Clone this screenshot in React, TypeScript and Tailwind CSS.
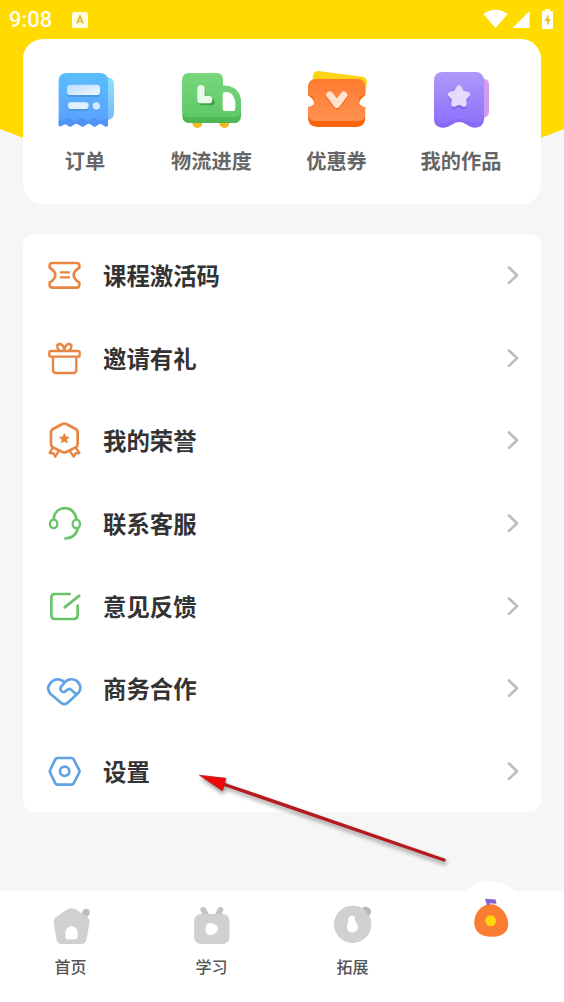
import type { ReactNode } from "react";

const ORANGE = "#e98540";
const GREEN = "#68c468";
const BLUE = "#5fa3e2";

function StatusBar() {
    return (
        <div className="flex h-[39px] items-center pl-[9px] pr-[11px] text-[#fffdee]">
            <span className="font-['Roboto',sans-serif] text-[22px] font-medium leading-[39px]">9:08</span>
            <svg className="ml-[20px]" width="16" height="16" viewBox="0 0 16 16">
                <rect width="16" height="16" rx="1.5" fill="#fffbe0" />
                <path d="M5 11.5L8 4l3 7.5M6 9.3h4" fill="none" stroke="#dfc024" strokeWidth="1.6" />
            </svg>
            <div className="ml-auto flex items-center pb-0.5">
                <svg width="25" height="20" viewBox="0 0 25 20" fill="#fff">
                    <path d="M0.3 5Q12.5 -3.500 24.700 5L12.500 19z" />
                </svg>
                <svg className="ml-1" width="18" height="20" viewBox="0 0 18 20" fill="#fff">
                    <path d="M17.500 2v17H0.500z" />
                </svg>
                <svg className="ml-3" width="11" height="20" viewBox="0 0 11 20">
                    <path d="M3 0h5v2h2q1 0 1 1v16q0 1-1 1H1q-1 0-1-1V3q0-1 1-1h2z" fill="#fff" />
                    <path d="M6.500 5L2.500 12H5v5l4-7H6.500z" fill="#e3c326" />
                </svg>
            </div>
        </div>
    );
}

function OrderIcon() {
    return (
        <svg width="60" height="60" viewBox="45 30 180 180">
            <defs>
                <linearGradient id="order-body" x1="0" y1="0" x2="0" y2="1">
                    <stop offset="0" stopColor="#59bffb" />
                    <stop offset="1" stopColor="#5c9dff" />
                </linearGradient>
                <linearGradient id="order-back" x1="0" y1="0" x2="0" y2="1">
                    <stop offset="0" stopColor="#8fe0fc" />
                    <stop offset="1" stopColor="#76b9fb" />
                </linearGradient>
                <linearGradient id="order-line" x1="0" y1="0" x2="1" y2="1">
                    <stop offset="0" stopColor="#b9dcff" />
                    <stop offset="1" stopColor="#f0f7ff" />
                </linearGradient>
            </defs>
            <path d="M190 52h14q18 2 18 20v88q0 16-18 20h-14z" fill="url(#order-back)" />
            <path d="M80 39h100q24 0 24 24v134q-7 6-14-1-9-10-18 0-8 8-16 0-10-10-20 0-8 8-17 0-10-10-20 0-8 8-17 0-7-6-14 0-6 5-12 1V63q0-24 24-24z" fill="url(#order-body)" />
            <path d="M56 172c4 12 12 13 19 6 7-6 13-6 20 0 7 6 12 6 19 0 7-6 13-6 20 0 7 6 12 6 19 0 7-6 13-6 20 0 7 6 12 6 19 0 4-3 8-4 12-3v22q-7 6-14-1-9-10-18 0-8 8-16 0-10-10-20 0-8 8-17 0-10-10-20 0-8 8-17 0-7-6-14 0-6 5-12 1z" fill="#4b8df0" opacity=".65" />
            <rect x="81" y="79" width="99" height="32" rx="10" fill="#448fd8" opacity=".7" />
            <rect x="84" y="132" width="62" height="21" rx="10" fill="#448fd8" opacity=".7" />
            <circle cx="169" cy="142" r="11" fill="#448fd8" opacity=".7" />
            <rect x="81" y="74" width="99" height="31" rx="10" fill="url(#order-line)" />
            <rect x="84" y="127" width="62" height="20" rx="10" fill="#e0f1ff" />
            <circle cx="169" cy="138" r="11" fill="#d2ebff" />
        </svg>
    );
}

function TruckIcon() {
    return (
        <svg width="60" height="60" viewBox="36 30 180 180">
            <defs>
                <linearGradient id="truck-body" x1="0" y1="0" x2="0" y2="1">
                    <stop offset="0" stopColor="#79d77c" />
                    <stop offset="1" stopColor="#5fc967" />
                </linearGradient>
            </defs>
            <circle cx="82" cy="189" r="15" fill="#f5b91d" />
            <circle cx="163" cy="189" r="15" fill="#f5b91d" />
            <path d="M60 39h77q22 0 22 22v16h8c28 2 45 20 46 49v41q0 22-22 22H60q-23 0-23-22V61q0-22 23-22z" fill="#4fb654" />
            <path d="M60 39h77q22 0 22 22v16h8c28 2 45 20 46 49v26q0 20-22 20H60q-23 0-23-20V61q0-22 23-22z" fill="url(#truck-body)" />
            <path d="M159 99q3-4 12-3 22 3 25 31v19q0 7-7 7h-24q-7 0-7-7v-40q0-5 1-7z" fill="#fff" />
            <path d="M96 93v33h28" fill="none" stroke="#429f49" strokeWidth="20" strokeLinecap="round" strokeLinejoin="round" />
            <path d="M93 86v33h23" fill="none" stroke="#e9fae8" strokeWidth="22" strokeLinecap="round" strokeLinejoin="round" />
        </svg>
    );
}

function CouponIcon() {
    return (
        <svg width="60" height="60" viewBox="34.5 30 180 180">
            <defs>
                <linearGradient id="coupon-body" x1="0" y1="0" x2="0" y2="1">
                    <stop offset="0" stopColor="#ff7b2f" />
                    <stop offset="1" stopColor="#ff9150" />
                </linearGradient>
            </defs>
            <path d="M52 47q3-15 17-14l132 17q14 3 13 17l-4 35H50z" fill="#fdd313" />
            <path d="M62 59h122q25 0 25 23v24c-8 7-17 14-18 22 4 9 10 11 18 11v38q-2 24-28 24H66q-27-1-28-24v-38c9 0 16-4 18-11-1-8-9-15-18-22V82q0-23 24-23z" fill="#fa650c" />
            <path d="M62 57h122q25 0 25 23v24c-11 2-18 7-18 17 1 10 8 13 18 14v26q0 22-24 22H62q-24 0-24-22v-26c10-1 17-4 18-14 0-10-7-15-18-17V80q0-23 24-23z" fill="url(#coupon-body)" />
            <path d="M38 122q14 1 18 7-4 9-18 12zM209 122q-14 1-18 7 4 9 18 12z" fill="#fff" />
            <path d="M102 111l22 28 22-28" fill="none" stroke="#dd5c17" strokeWidth="19" strokeLinecap="round" strokeLinejoin="round" opacity=".6" />
            <path d="M103 105l21 28 21-28" fill="none" stroke="#ffe3cd" strokeWidth="21" strokeLinecap="round" strokeLinejoin="round" />
        </svg>
    );
}

function WorksIcon() {
    return (
        <svg width="60" height="60" viewBox="33 30 180 180">
            <defs>
                <linearGradient id="works-body" x1="0" y1="0" x2="0" y2="1">
                    <stop offset="0" stopColor="#ae9af9" />
                    <stop offset="1" stopColor="#8b6dfc" />
                </linearGradient>
                <linearGradient id="works-star" x1="0" y1="0" x2="0" y2="1">
                    <stop offset="0" stopColor="#f4f0ff" />
                    <stop offset="1" stopColor="#d5c8fd" />
                </linearGradient>
            </defs>
            <path d="M180 56h12q15 3 15 18v80q0 16-15 20h-12z" fill="#cf9cf1" />
            <path d="M68 36h98q26 0 26 26v118q-3 22-28 23c-17-1-29-17-46-17-18 0-29 16-46 17-24 0-30-14-30-27V62q0-26 26-26z" fill="url(#works-body)" />
            <path d="M42 167q2 22 25 23 10 0 22-6 28-16 55 0 14 7 25 6 20-3 23-22v12q-3 22-28 23c-17-1-29-17-46-17-18 0-29 16-46 17-24 0-30-14-30-27z" fill="#7f62ee" opacity=".4" />
            <path d="M117 93l8 15 17 3-12 13 2 17-15-7-15 7 2-17-12-13 17-3z" fill="#7355d8" stroke="#7355d8" strokeWidth="15" strokeLinejoin="round" opacity=".45" />
            <path d="M117 84l8 16 17 3-12 12 2 17-15-7-15 7 2-17-12-12 17-3z" fill="url(#works-star)" stroke="#e5dcfd" strokeWidth="16" strokeLinejoin="round" />
        </svg>
    );
}

const shortcuts = [
    { label: "订单", icon: <OrderIcon /> },
    { label: "物流进度", icon: <TruckIcon /> },
    { label: "优惠券", icon: <CouponIcon /> },
    { label: "我的作品", icon: <WorksIcon /> },
];

function LineIcon({ viewBox, color, children }: { viewBox: string; color: string; children: ReactNode }) {
    return (
        <svg
            className="shrink-0"
            width="36"
            height="36"
            viewBox={viewBox}
            fill="none"
            stroke={color}
            strokeWidth="8"
            strokeLinecap="round"
            strokeLinejoin="round"
        >
            {children}
        </svg>
    );
}

const menuItems = [
    {
        label: "课程激活码",
        icon: (
            <LineIcon viewBox="78 82 108 108" color={ORANGE}>
                <path d="M97 100h73q8 0 8 8v6c-12 8-17 14-17 22s5 15 17 23v6q0 9-8 9H97q-8 0-8-9v-6c12-8 17-15 17-23s-5-14-17-22v-6q0-8 8-8z" />
                <path d="M123 128h24M123 143h24" strokeWidth="7" />
            </LineIcon>
        ),
    },
    {
        label: "邀请有礼",
        icon: (
            <LineIcon viewBox="78 330 108 108" color={ORANGE}>
                <rect x="88" y="363" width="91" height="17" rx="4" strokeWidth="7" />
                <path d="M99 382v38q0 9 9 9h52q9 0 9-9v-38" strokeWidth="7" />
                <path d="M133 362c-1-12-7-20-15-20-9 2-8 12 0 19M133 362c1-12 7-20 15-20 9 2 8 12 0 19" strokeWidth="7" />
            </LineIcon>
        ),
    },
    {
        label: "我的荣誉",
        icon: (
            <LineIcon viewBox="78 578 108 108" color={ORANGE}>
                <path d="M127 584q6-3 12 0l28 15q6 3 6 10v35q0 7-6 10l-28 14q-6 3-12 0l-28-14q-6-3-6-10v-35q0-7 6-10z" />
                <path d="M133 613l4.500 9 10 1.500-7.500 7 2 10-9-5-9 5 2-10-7.500-7 10-1.500z" fill={ORANGE} strokeWidth="2" />
                <path d="M97 657l-8 14 12 1 5 10 9-15M169 657l9 14-12 1-5 10-10-15" strokeWidth="7" />
            </LineIcon>
        ),
    },
    {
        label: "联系客服",
        icon: (
            <LineIcon viewBox="78 75.500 108 108" color={GREEN}>
                <path d="M101 116c3-20 17-31 34-31s31 12 34 31" />
                <ellipse cx="101" cy="132" rx="11" ry="13" strokeWidth="7" />
                <ellipse cx="169" cy="132" rx="11" ry="13" strokeWidth="7" />
                <path d="M174 146c-5 17-19 29-38 30" />
            </LineIcon>
        ),
    },
    {
        label: "意见反馈",
        icon: (
            <LineIcon viewBox="78 323 108 108" color={GREEN}>
                <path d="M149 341h-44q-11 0-11 11v53q0 11 11 11h57q11 0 11-11v-29" />
                <path d="M134 381l44-35" />
            </LineIcon>
        ),
    },
    {
        label: "商务合作",
        icon: (
            <LineIcon viewBox="78 571 108 108" color={BLUE}>
                <path d="M133 608c-9-10-25-12-35-4-15 10-17 26-7 38l32 27q10 9 20 0l31-28c12-12 8-28-5-38-11-7-26-5-35 5l-10 12c-7 9 1 20 10 16 7-3 10-10 16-8 4 1 8 8 16 13" />
            </LineIcon>
        ),
    },
    {
        label: "设置",
        icon: (
            <LineIcon viewBox="78 819 108 108" color={BLUE}>
                <path d="M113 834h41q5 0 7 4l16 31q3 5 0 10l-16 31q-2 4-7 4h-41q-5 0-7-4l-15-31q-3-5 0-10l15-31q2-4 7-4z" />
                <circle cx="134" cy="874" r="14" />
            </LineIcon>
        ),
    },
];

const tabs = [
    {
        label: "首页",
        icon: (
            <svg width="40" height="40" viewBox="151.500 105 120 120">
                <path d="M242 135l5-13c5-8 19-8 21 4 0 10-9 16-17 19z" fill="#bcbcbc" />
                <path d="M201 118q12-7 24 0l34 22q10 7 8 18l-9 50q-2 14-15 14h-60q-13 0-15-14l-8-48q-2-12 7-19z" fill="#d0d0d0" />
                <path d="M195 188c1-25 35-26 36 0v15q0 5-6 5h-24q-6 0-6-5z" fill="#fff" />
            </svg>
        ),
    },
    {
        label: "学习",
        icon: (
            <svg width="40" height="40" viewBox="575.500 105 120 120">
                <path d="M609 119l8 14M661 119l-7 14" stroke="#c3c3c3" strokeWidth="17" strokeLinecap="round" />
                <rect x="582" y="132" width="106" height="90" rx="20" fill="#d0d0d0" />
                <path d="M617 169q4-14 20-9 23 9 14 24-12 14-26 11-12-5-8-26z" fill="#fff" />
            </svg>
        ),
    },
    {
        label: "拓展",
        icon: (
            <svg width="40" height="40" viewBox="153 105 120 120">
                <circle cx="212" cy="163" r="56" fill="#d0d0d0" />
                <path d="M240 113c11-7 29 1 27 13q0 8-6 11-9-13-21-24z" fill="#b8b8b8" />
                <path d="M200 143c4-10 19-8 19 3 1 11 9 16 9 26-1 20-31 20-33 1 0-12 6-14 3-21q-1-5 2-9z" fill="#fff" />
            </svg>
        ),
    },
];

export default function App() {
    return (
        <div className="relative h-[1002px] w-[564px] overflow-hidden bg-[#f6f6f6] font-['Noto_Sans_CJK_SC',sans-serif]">
            {/* Curved yellow backdrop */}
            <svg className="absolute left-0 top-0" width="564" height="190" viewBox="0 0 564 190">
                <path d="M0 0h564v129Q282 243 0 129z" fill="#ffdb00" />
            </svg>

            <div className="relative flex h-full flex-col">
                <StatusBar />

                {/* Shortcuts */}
                <div className="mx-[23px] grid h-[165px] grid-cols-[124px_129px_121px_128px] rounded-[20px] bg-white pt-[31px]">
                    {shortcuts.map((s) => (
                        <div key={s.label} className="flex flex-col items-center">
                            {s.icon}
                            <span className="mt-[17px] whitespace-nowrap text-[20.2px] font-bold leading-7 text-[#666]">{s.label}</span>
                        </div>
                    ))}
                </div>

                {/* Menu */}
                <div className="mx-[23px] mt-[30px] flex h-[578px] flex-col rounded-xl bg-white">
                    {menuItems.map((item) => (
                        <div key={item.label} className="flex flex-1 items-center pl-[23px] pr-[22px]">
                            {item.icon}
                            <span className="ml-[21px] text-[23.4px] font-bold leading-8 text-[#333]">{item.label}</span>
                            <svg className="ml-auto" width="12" height="20" viewBox="0 0 12 20" fill="none" stroke="#bcbcbc" strokeWidth="2.6" strokeLinecap="round" strokeLinejoin="round">
                                <path d="M2 2.500l8 7.700-8 7.700" />
                            </svg>
                        </div>
                    ))}
                </div>

                {/* Tab bar */}
                <div className="relative mt-auto flex h-[111px] bg-white">
                    <div className="absolute -top-[10px] left-[452px] size-[76px] rounded-full bg-white" />
                    {tabs.map((tab) => (
                        <div key={tab.label} className="flex w-[141px] flex-col items-center pt-[14px]">
                            {tab.icon}
                            <span className="mt-[9px] text-[16px] font-medium leading-6 text-[#555]">{tab.label}</span>
                        </div>
                    ))}
                    <div className="relative flex w-[141px] flex-col items-center pt-[6px]">
                        <svg width="40" height="40" viewBox="575.500 80.500 120 120">
                            <path d="M627 102C652 102 678 130 678 163C678 190 655 200 628 200C600 200 577 188 576 158C576 125 600 102 627 102z" fill="#fb7d32" />
                            <path d="M609 86l31 2 3 13-20-2-1 6h-8z" fill="#8564d2" />
                            <path d="M618 137q11-5 19 3 9 13-1 25-12 7-22-1-12-16 4-27z" fill="#ffd60a" />
                        </svg>
                    </div>
                </div>
            </div>

            {/* Pointer to the settings row */}
            <svg className="absolute left-[190px] top-[765px] drop-shadow-[1px_3px_2px_rgba(0,0,0,0.4)]" width="270" height="110" viewBox="190 765 270 110">
                <path d="M223 784l221 76" stroke="#b51a1c" strokeWidth="3.4" strokeLinecap="round" />
                <path d="M199.500 775.300l26.500 3-3.500 12.500z" fill="#ee0808" stroke="#b51a1c" strokeWidth="0.800" />
            </svg>
        </div>
    );
}
